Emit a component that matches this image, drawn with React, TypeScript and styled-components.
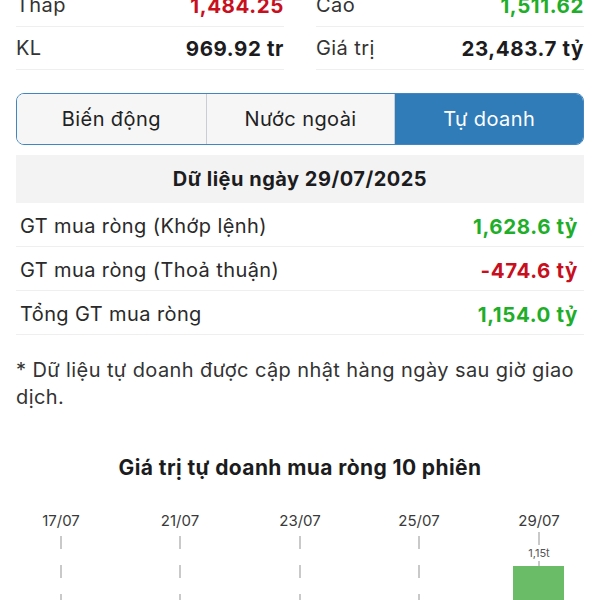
import React from 'react'
import styled, { createGlobalStyle } from 'styled-components'

const GlobalStyle = createGlobalStyle`
  html, body {
    margin: 0;
    padding: 0;
    background: #ffffff;
    overflow: hidden;
  }
  body {
    font-family: Inter, "Noto Sans", "Liberation Sans", sans-serif;
    color: #1c1c1e;
    letter-spacing: 0.4px;
  }
`

const Page = styled.div`
  width: 600px;
  margin-top: -16px;
`

const Content = styled.div`
  padding: 0 16px;
`

const StatsGrid = styled.div`
  display: grid;
  grid-template-columns: 1fr 1fr;
  column-gap: 32px;
`

const StatCell = styled.div`
  display: flex;
  align-items: center;
  justify-content: space-between;
  height: 42px;
  border-bottom: 1px solid #efefef;
  font-size: 20px;
`

const StatLabel = styled.span`
  color: #333;
`

const Value = styled.span<{ $tone?: 'up' | 'down' }>`
  font-weight: 700;
  font-size: 20.5px;
  letter-spacing: 0.6px;
  color: ${(p) => (p.$tone === 'up' ? '#1fae2a' : p.$tone === 'down' ? '#c70f1e' : '#1c1c1e')};
`

const Segmented = styled.div`
  display: grid;
  grid-template-columns: repeat(3, 1fr);
  margin-top: 23px;
  height: 52px;
  border: 1px solid #3f86c2;
  border-radius: 8px;
  overflow: hidden;
  box-sizing: border-box;
`

const Segment = styled.div<{ $active?: boolean }>`
  display: flex;
  align-items: center;
  justify-content: center;
  font-size: 20px;
  background: ${(p) => (p.$active ? '#2f7cb8' : '#f6f6f7')};
  color: ${(p) => (p.$active ? '#ffffff' : '#222')};
  & + & {
    border-left: 1px solid #c9cdd4;
  }
`

const DateBand = styled.div`
  margin-top: 10px;
  height: 48px;
  background: #f3f3f3;
  display: flex;
  align-items: center;
  justify-content: center;
  font-size: 20px;
  font-weight: 700;
  letter-spacing: 0.5px;
  color: #1c1c1e;
`

const DataRow = styled.div`
  display: flex;
  align-items: center;
  justify-content: space-between;
  height: 44px;
  padding: 3px 6px 0 4px;
  box-sizing: border-box;
  border-bottom: 1px solid #efefef;
  font-size: 20px;
`

const RowLabel = styled.span`
  color: #2a2a2a;
`

const Note = styled.p`
  margin: 22px 0 0;
  font-size: 20px;
  line-height: 27px;
  color: #333;
`

const ChartTitle = styled.h3`
  margin: 44px 0 0;
  text-align: center;
  font-size: 21px;
  line-height: 25px;
  font-weight: 700;
  color: #1c1c1e;
`

const ChartBox = styled.div`
  margin-top: 25px;
  height: 120px;
`

const stats = [
  [
    { label: 'Thấp', value: '1,484.25', tone: 'down' as const },
    { label: 'Cao', value: '1,511.62', tone: 'up' as const },
  ],
  [
    { label: 'KL', value: '969.92 tr' },
    { label: 'Giá trị', value: '23,483.7 tỷ' },
  ],
]

const rows = [
  { label: 'GT mua ròng (Khớp lệnh)', value: '1,628.6 tỷ', tone: 'up' as const },
  { label: 'GT mua ròng (Thoả thuận)', value: '-474.6 tỷ', tone: 'down' as const },
  { label: 'Tổng GT mua ròng', value: '1,154.0 tỷ', tone: 'up' as const },
]

const ticks = [
  { x: 61, label: '17/07' },
  { x: 180, label: '21/07' },
  { x: 300, label: '23/07' },
  { x: 419, label: '25/07' },
  { x: 539, label: '29/07' },
]

function Chart() {
  return (
    <svg width="600" height="120" viewBox="0 0 600 120">
      {ticks.map((t) => (
        <g key={t.label}>
          <text
            x={t.x}
            y={21}
            textAnchor="middle"
            fontSize="15"
            fill="#3a3a3a"
            letterSpacing="0"
            fontFamily="Inter, 'Liberation Sans', sans-serif"
          >
            {t.label}
          </text>
          <line
            x1={t.x}
            x2={t.x}
            y1={t.x === 539 ? 27 : 31}
            y2={120}
            stroke="#b8b8b8"
            strokeWidth="1.5"
            strokeDasharray="13 16"
          />
        </g>
      ))}
      <rect x={513} y={61} width={51} height={60} fill="#6abd66" />
      <text
        x={539}
        y={52}
        textAnchor="middle"
        fontSize="11"
        fill="#555"
        letterSpacing="0"
        fontFamily="Inter, 'Liberation Sans', sans-serif"
      >
        1,15t
      </text>
    </svg>
  )
}

export default function App() {
  return (
    <Page>
      <GlobalStyle />
      <Content>
        {stats.map((pair, i) => (
          <StatsGrid key={i}>
            {pair.map((s) => (
              <StatCell key={s.label}>
                <StatLabel>{s.label}</StatLabel>
                <Value $tone={s.tone}>{s.value}</Value>
              </StatCell>
            ))}
          </StatsGrid>
        ))}
        <Segmented>
          <Segment>Biến động</Segment>
          <Segment>Nước ngoài</Segment>
          <Segment $active>Tự doanh</Segment>
        </Segmented>
        <DateBand>Dữ liệu ngày 29/07/2025</DateBand>
        {rows.map((r) => (
          <DataRow key={r.label}>
            <RowLabel>{r.label}</RowLabel>
            <Value $tone={r.tone}>{r.value}</Value>
          </DataRow>
        ))}
        <Note>* Dữ liệu tự doanh được cập nhật hàng ngày sau giờ giao dịch.</Note>
        <ChartTitle>Giá trị tự doanh mua ròng 10 phiên</ChartTitle>
      </Content>
      <ChartBox>
        <Chart />
      </ChartBox>
    </Page>
  )
}
